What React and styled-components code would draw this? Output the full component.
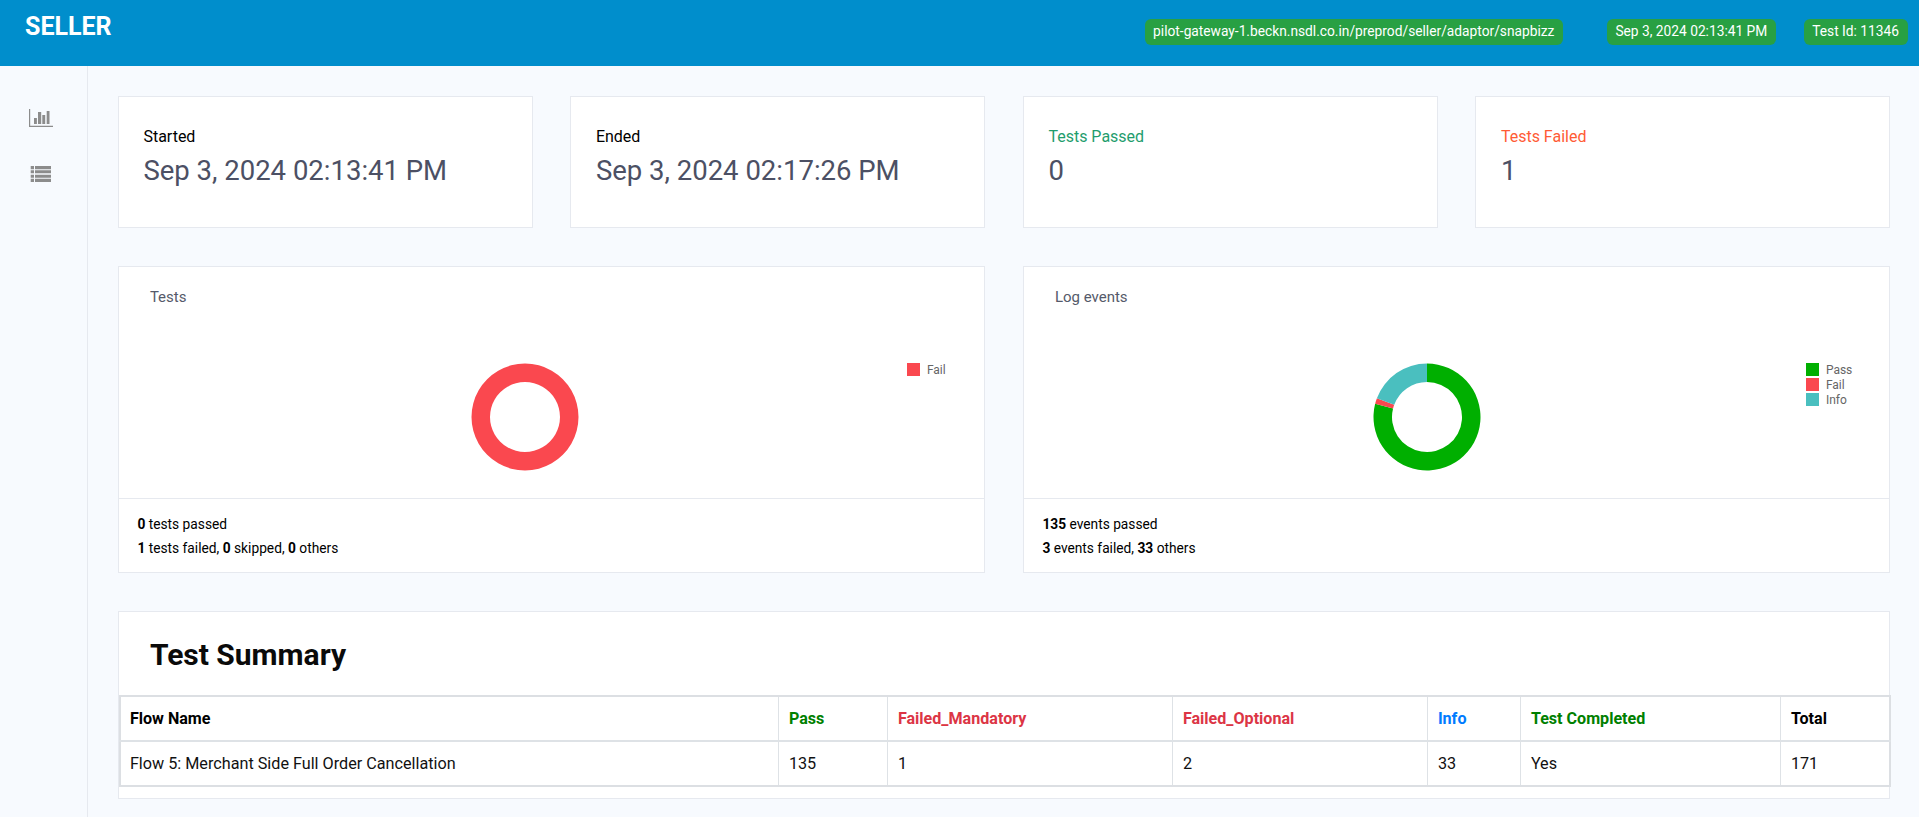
import React from "react";
import styled, { createGlobalStyle } from "styled-components";

const Global = createGlobalStyle`
  html, body { margin: 0; padding: 0; background: #f7fafe; }
  body { font-family: Roboto, "Liberation Sans", sans-serif; color: #000; overflow: hidden; }
  * { box-sizing: border-box; }
`;

const Header = styled.header`
  height: 66px;
  background: #008ecc;
  display: flex;
  align-items: flex-start;
  padding: 0 11.5px 0 25px;
`;
const Brand = styled.div`
  color: #fff;
  font-size: 25px;
  font-weight: 700;
  line-height: 28px;
  margin-top: 13px;
  margin-right: auto;
`;
const Badge = styled.span`
  height: 26px;
  margin-top: 19px;
  margin-left: ${(p) => p.$gap}px;
  padding: 0 8.5px;
  border-radius: 6px;
  background: #28a043;
  color: #fff;
  font-size: 13.75px;
  font-weight: 400;
  line-height: 25px;
  white-space: nowrap;
`;
const Body = styled.div`
  display: flex;
  min-height: 751px;
`;
const Sidebar = styled.nav`
  width: 88px;
  flex: none;
  border-right: 1px solid #e6e9ef;
  display: flex;
  flex-direction: column;
  align-items: flex-start;
  padding: 43px 0 0 29px;
  gap: 39px;
`;
const Icon = styled.svg`
  display: block;
  fill: #8c8c8c;
`;
const Main = styled.main`
  flex: 1;
  min-width: 0;
  padding: 30px 28.6px 0 29.9px;
  display: flex;
  flex-direction: column;
  gap: 38px;
`;
const StatRow = styled.section`
  display: grid;
  grid-template-columns: repeat(4, 1fr);
  gap: 37.5px;
`;
const Card = styled.div`
  background: #fff;
  border: 1px solid #e6e9ef;
`;
const StatCard = styled(Card)`
  height: 132px;
  padding: 29px 24.5px 0;
`;
const StatLabel = styled.div`
  font-size: 16px;
  line-height: 22px;
  color: ${(p) => p.$color || "#000"};
`;
const StatValue = styled.div`
  font-size: 27.5px;
  line-height: 32px;
  margin-top: 7px;
  color: #4c5064;
`;
const ChartRow = styled.section`
  display: grid;
  grid-template-columns: 1fr 1fr;
  gap: 37.5px;
`;
const ChartCard = styled(Card)`
  height: 307px;
  display: flex;
  flex-direction: column;
`;
const ChartTitle = styled.div`
  font-size: 15px;
  line-height: 20px;
  color: #555a6a;
  padding: 20px 0 0 31px;
  height: 40px;
`;
const ChartBody = styled.div`
  height: 191px;
  display: flex;
  align-items: flex-start;
  padding-top: 56px;
`;
const DonutSlot = styled.div`
  flex: none;
  width: ${(p) => p.$width}px;
  display: flex;
  justify-content: center;
`;
const Legend = styled.ul`
  list-style: none;
  margin: 0 0 0 -24px;
  padding: 0;
  display: flex;
  flex-direction: column;
  gap: 2px;
`;
const LegendItem = styled.li`
  display: flex;
  align-items: center;
  gap: 7px;
  height: 13px;
  font-size: 12px;
  color: #666;
`;
const Swatch = styled.i`
  width: 13px;
  height: 13.5px;
  background: ${(p) => p.$color};
`;
const ChartFooter = styled.div`
  flex: 1;
  border-top: 1px solid #e6e9ef;
  padding: 13px 18.5px 0;
  font-size: 13.75px;
  line-height: 24px;
  color: #000;
`;
const Line = styled.div``;
const SummaryCard = styled(Card)`
  height: 188px;
`;
const SummaryTitle = styled.h2`
  margin: 0;
  height: 83px;
  padding: 25px 0 0 31px;
  font-size: 30px;
  line-height: 36px;
  font-weight: 700;
  color: #0a0a0a;
`;
const Table = styled.table`
  width: 100%;
  border-collapse: collapse;
  table-layout: fixed;
  border: 2px solid #dcdfe3;
`;
const Th = styled.th`
  height: 45px;
  padding: 0 9.5px;
  text-align: left;
  font-weight: 700;
  font-size: 16.1px;
  color: ${(p) => p.$color || "#000"};
  border-left: 1px solid #dee2e6;
  border-bottom: 2px solid #dee2e6;
  &:first-child { padding-left: 9px; }
`;
const Td = styled.td`
  height: 45px;
  padding: 0 9.5px;
  font-size: 16.2px;
  color: #111;
  border-left: 1px solid #dee2e6;
  &:first-child { padding-left: 9px; }
`;

const RED = "#fa484f";
const GREEN = "#00af00";
const TEAL = "#4abfbf";

function polar(r, a) {
  const t = ((a - 90) * Math.PI) / 180;
  return [54 + r * Math.cos(t), 54 + r * Math.sin(t)];
}
function slice(start, end) {
  const [x1, y1] = polar(53.5, start);
  const [x2, y2] = polar(53.5, end);
  const [x3, y3] = polar(35, end);
  const [x4, y4] = polar(35, start);
  const large = end - start > 180 ? 1 : 0;
  return `M${x1} ${y1}A53.5 53.5 0 ${large} 1 ${x2} ${y2}L${x3} ${y3}A35 35 0 ${large} 0 ${x4} ${y4}Z`;
}
function Donut({ data }) {
  const total = data.reduce((s, d) => s + d.value, 0);
  let angle = 0;
  return (
    <svg width="108" height="108" viewBox="0 0 108 108">
      {data.map((d) => {
        const sweep = (d.value / total) * 360;
        const start = angle;
        angle += sweep;
        if (sweep >= 360) {
          return (
            <path
              key={d.label}
              fill={d.color}
              fillRule="evenodd"
              d="M54 .5a53.5 53.5 0 1 0 .001 0ZM54 19a35 35 0 1 1-.001 0Z"
            />
          );
        }
        return <path key={d.label} fill={d.color} d={slice(start, start + sweep)} />;
      })}
    </svg>
  );
}

function ChartPanel({ title, slot, data, children }) {
  return (
    <ChartCard>
      <ChartTitle>{title}</ChartTitle>
      <ChartBody>
        <DonutSlot $width={slot}>
          <Donut data={data} />
        </DonutSlot>
        <Legend>
          {data.map((d) => (
            <LegendItem key={d.label}>
              <Swatch $color={d.color} />
              {d.label}
            </LegendItem>
          ))}
        </Legend>
      </ChartBody>
      <ChartFooter>{children}</ChartFooter>
    </ChartCard>
  );
}

const columns = [
  { name: "Flow Name", width: 659, value: "Flow 5: Merchant Side Full Order Cancellation" },
  { name: "Pass", width: 109, color: "#008000", value: "135" },
  { name: "Failed_Mandatory", width: 285, color: "#dc3545", value: "1" },
  { name: "Failed_Optional", width: 255, color: "#dc3545", value: "2" },
  { name: "Info", width: 93, color: "#007bff", value: "33" },
  { name: "Test Completed", width: 260, color: "#008000", value: "Yes" },
  { name: "Total", width: 109, value: "171" },
];

const stats = [
  { label: "Started", value: "Sep 3, 2024 02:13:41 PM" },
  { label: "Ended", value: "Sep 3, 2024 02:17:26 PM" },
  { label: "Tests Passed", value: "0", color: "#1f9d6d" },
  { label: "Tests Failed", value: "1", color: "#ff5b35" },
];

export default function App() {
  return (
    <>
      <Global />
      <Header>
        <Brand>SELLER</Brand>
        <Badge $gap={0}>pilot-gateway-1.beckn.nsdl.co.in/preprod/seller/adaptor/snapbizz</Badge>
        <Badge $gap={44}>Sep 3, 2024 02:13:41 PM</Badge>
        <Badge $gap={28}>Test Id: 11346</Badge>
      </Header>
      <Body>
        <Sidebar>
          <Icon width="24" height="18" viewBox="0 0 24 18">
            <path d="M0 0h1.2v16.8H24V18H0z" />
            <path d="M5 9h2.9v6H5zM9 3h3.2v12H9zM13.3 6h2.9v9h-2.9zM17.7 2h2.8v13h-2.8z" />
          </Icon>
          <Icon width="22" height="16" viewBox="0 0 22 16">
            <path d="M1.7 0H5v3.3H1.7zM6 0h16v3.3H6zM1.7 4.3H5v3H1.7zM6 4.3h16v3H6zM1.7 8.7H5v3H1.7zM6 8.7h16v3H6zM1.7 12.7H5V16H1.7zM6 12.7h16V16H6z" />
          </Icon>
        </Sidebar>
        <Main>
          <StatRow>
            {stats.map((s) => (
              <StatCard key={s.label}>
                <StatLabel $color={s.color}>{s.label}</StatLabel>
                <StatValue>{s.value}</StatValue>
              </StatCard>
            ))}
          </StatRow>
          <ChartRow>
            <ChartPanel title="Tests" slot={812} data={[{ label: "Fail", value: 1, color: RED }]}>
              <Line><b>0</b> tests passed</Line>
              <Line><b>1</b> tests failed, <b>0</b> skipped, <b>0</b> others</Line>
            </ChartPanel>
            <ChartPanel
              title="Log events"
              slot={806}
              data={[
                { label: "Pass", value: 135, color: GREEN },
                { label: "Fail", value: 3, color: RED },
                { label: "Info", value: 33, color: TEAL },
              ]}
            >
              <Line><b>135</b> events passed</Line>
              <Line><b>3</b> events failed, <b>33</b> others</Line>
            </ChartPanel>
          </ChartRow>
          <SummaryCard>
            <SummaryTitle>Test Summary</SummaryTitle>
            <Table>
              <colgroup>
                {columns.map((c) => (
                  <col key={c.name} width={c.width} />
                ))}
              </colgroup>
              <thead>
                <tr>
                  {columns.map((c) => (
                    <Th key={c.name} $color={c.color}>{c.name}</Th>
                  ))}
                </tr>
              </thead>
              <tbody>
                <tr>
                  {columns.map((c) => (
                    <Td key={c.name}>{c.value}</Td>
                  ))}
                </tr>
              </tbody>
            </Table>
          </SummaryCard>
        </Main>
      </Body>
    </>
  );
}
